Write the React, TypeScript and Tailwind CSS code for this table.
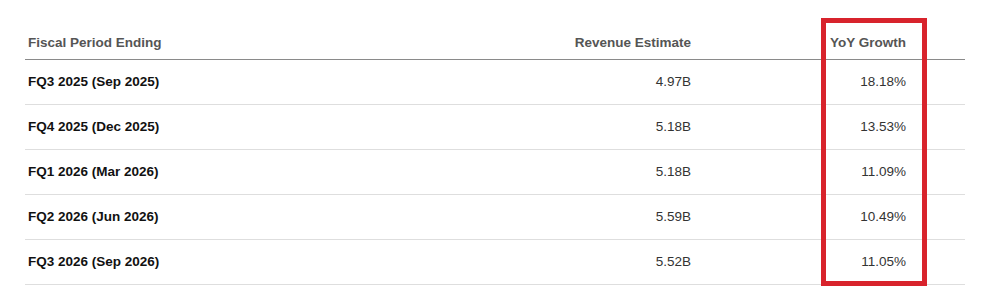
const rows = [
  { period: "FQ3 2025 (Sep 2025)", revenue: "4.97B", growth: "18.18%" },
  { period: "FQ4 2025 (Dec 2025)", revenue: "5.18B", growth: "13.53%" },
  { period: "FQ1 2026 (Mar 2026)", revenue: "5.18B", growth: "11.09%" },
  { period: "FQ2 2026 (Jun 2026)", revenue: "5.59B", growth: "10.49%" },
  { period: "FQ3 2026 (Sep 2026)", revenue: "5.52B", growth: "11.05%" },
];

export default function App() {
  return (
    <div className="relative w-[1004px] h-[306px] bg-white font-['Liberation_Sans',Arial,sans-serif] text-[13.5px] overflow-hidden">
      {/* cut-off axis labels from the chart above */}
      <div className="h-[4px] overflow-hidden flex text-[11px] text-[#9a9a9a] font-bold">
        <span className="ml-[330px] mt-[-10px] leading-[13px]">Jul 25</span>
        <span className="ml-[393px] mt-[-10px] leading-[13px]">Jul 25</span>
      </div>

      <div className="ml-[25px] w-[940px]">
        <div className="flex items-end h-[56px] pb-[9px] border-b border-[#8a8a8a] font-bold text-[#555] leading-[15px]">
          <div className="flex-1 pl-[3px]">Fiscal Period Ending</div>
          <div className="text-right">Revenue Estimate</div>
          <div className="w-[215px] text-right">YoY Growth</div>
          <div className="w-[59px]" />
        </div>

        {rows.map((r) => (
          <div
            key={r.period}
            className="flex items-center h-[45px] pb-[1px] border-b border-[#dedede] leading-[15px]"
          >
            <div className="flex-1 pl-[3px] font-bold text-[#111]">{r.period}</div>
            <div className="text-right text-[#333]">{r.revenue}</div>
            <div className="w-[215px] text-right text-[#333]">{r.growth}</div>
            <div className="w-[59px]" />
          </div>
        ))}
      </div>

      {/* highlight box */}
      <div className="absolute left-[821px] top-[18px] w-[106px] h-[268px] border-[5px] border-[#d8232c]" />
    </div>
  );
}
